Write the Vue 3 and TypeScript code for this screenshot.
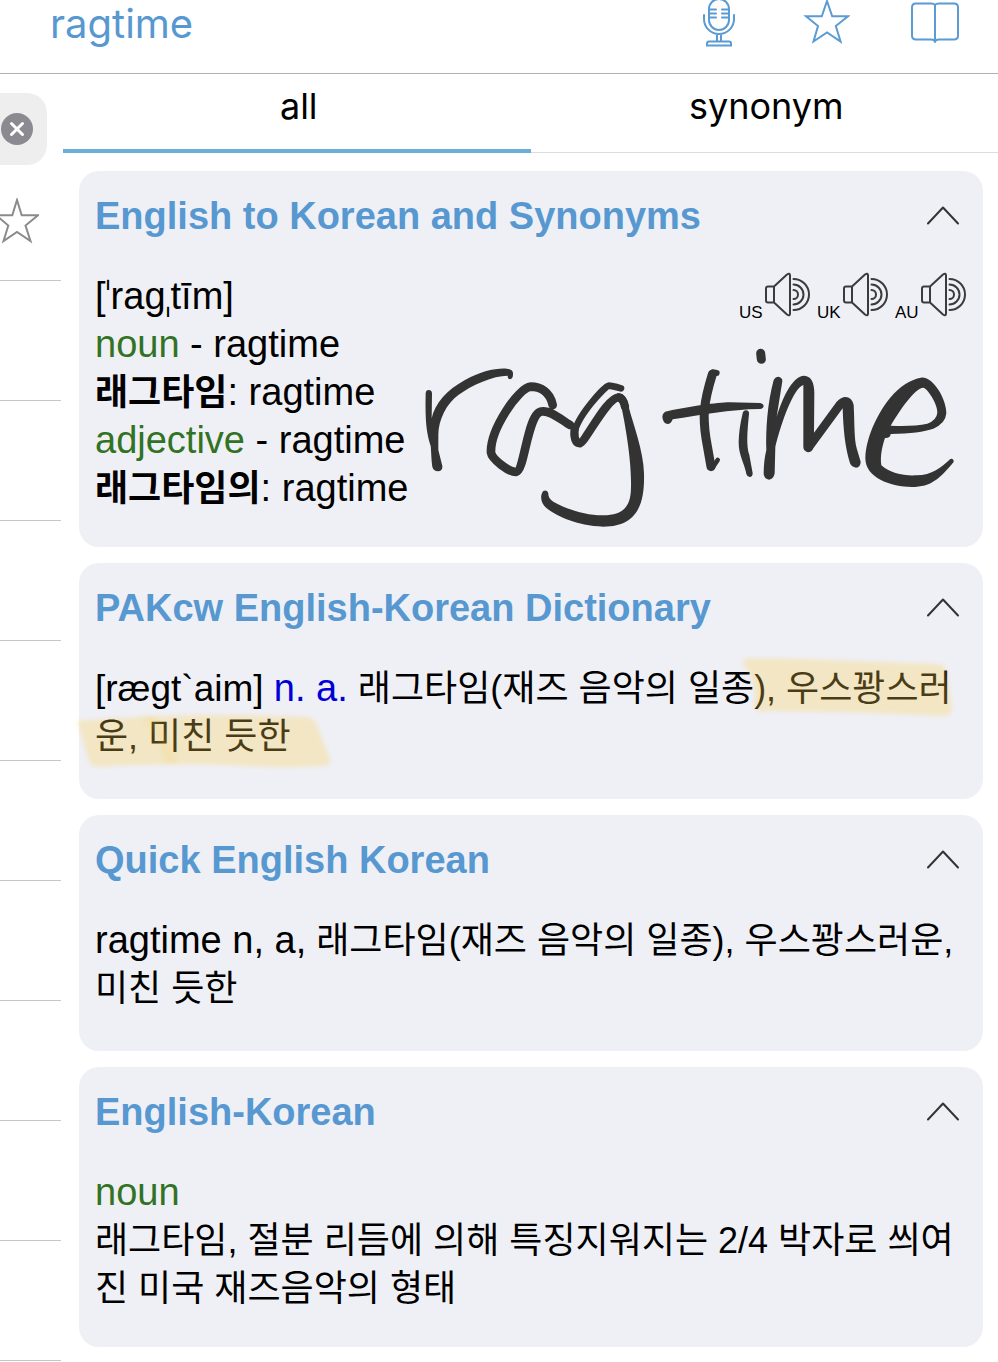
<script setup lang="ts">
import { ref } from 'vue'

type Tone = 'plain' | 'green' | 'blue' | 'strong' | 'phonetic' | 'stress' | 'gloss'
interface Part { text: string; tone?: Tone }
interface Entry {
  id: string
  title: string
  lines: Part[][]
  voices?: string[]
  sketch?: boolean
  marked?: boolean
  roomy?: boolean
}

const entries: Entry[] = [
  {
    id: 'synonyms',
    title: 'English to Korean and Synonyms',
    voices: ['US', 'UK', 'AU'],
    sketch: true,
    lines: [
      [
        { text: '[' },
        { text: 'ˈ', tone: 'stress' },
        { text: 'rag' },
        { text: 'ˌ', tone: 'stress' },
        { text: 'tīm]' },
      ],
      [{ text: 'noun', tone: 'green' }, { text: ' - ragtime' }],
      [{ text: '래그타임', tone: 'strong' }, { text: ': ragtime' }],
      [{ text: 'adjective', tone: 'green' }, { text: ' - ragtime' }],
      [{ text: '래그타임의', tone: 'strong' }, { text: ': ragtime' }],
    ],
  },
  {
    id: 'pakcw',
    title: 'PAKcw English-Korean Dictionary',
    marked: true,
    roomy: true,
    lines: [
      [
        { text: '[rægt`aim] ', tone: 'phonetic' },
        { text: 'n. a.', tone: 'blue' },
        { text: ' 래그타임(재즈 음악의 일종), 우스꽝스러운, 미친 듯한', tone: 'gloss' },
      ],
    ],
  },
  {
    id: 'quick',
    title: 'Quick English Korean',
    roomy: true,
    lines: [
      [
        { text: 'ragtime n, a,' },
        { text: ' 래그타임(재즈 음악의 일종), 우스꽝스러운, 미친 듯한', tone: 'gloss' },
      ],
    ],
  },
  {
    id: 'english-korean',
    title: 'English-Korean',
    lines: [
      [{ text: 'noun', tone: 'green' }],
      [{ text: '래그타임, 절분 리듬에 의해 특징지워지는 2/4 박자로 씌여진 미국 재즈음악의 형태', tone: 'gloss' }],
    ],
  },
]

const tabs = ['all', 'synonym']
const activeTab = ref('all')
const closed = ref<string[]>([])

function toggle(id: string) {
  closed.value = closed.value.includes(id)
    ? closed.value.filter((item) => item !== id)
    : [...closed.value, id]
}
</script>

<template>
  <div class="page">
    <header class="topbar">
      <h1 class="word">ragtime</h1>
      <div class="tools">
        <button type="button" class="tool" aria-label="Speak">
          <svg width="48" height="48" viewBox="0 0 48 48">
            <rect x="15" y="-1" width="20" height="31" rx="10" />
            <path d="M15 9.500h7M15 13.500h7M15 17.500h7M28 9.500h7M28 13.500h7M28 17.500h7M10 15v4a15 15 0 0 0 30 0v-4M23 34v7M27 34v7M13 45.500v-2q0-2 2-2h20q2 0 2 2v2z" />
          </svg>
        </button>
        <button type="button" class="tool" aria-label="Add to favourites">
          <svg width="48" height="48" viewBox="0 0 48 48">
            <path d="M25 1l5.200 15.200H46L33.800 26l4.800 15.500L25 32.500l-13.500 9L16 26 4 16.200h15.800z" />
          </svg>
        </button>
        <button type="button" class="tool" aria-label="Open dictionary">
          <svg width="50" height="48" viewBox="0 0 50 48">
            <path d="M25 5q-1-1.500-4-1.500H6Q2 3.500 2 7.500v28q0 4 4 4h15q4 0 4 3 0-3 4-3h15q4 0 4-4v-28q0-4-4-4H29q-3 0-4 1.500v37" />
          </svg>
        </button>
      </div>
    </header>

    <div class="columns">
      <aside class="side">
        <div class="search">
          <button type="button" class="clear" aria-label="Clear search">
            <svg width="32" height="32" viewBox="0 0 32 32">
              <circle cx="16" cy="16" r="16" />
              <path d="M10.500 10.500l11 11M21.500 10.500l-11 11" />
            </svg>
          </button>
        </div>
        <ul class="rows">
          <li v-for="n in 10" :key="n" class="row">
            <button v-if="n === 1" type="button" class="star" aria-label="Favourite">
              <svg width="44" height="46" viewBox="0 0 44 46">
                <path d="M22 2l4.700 15.200H43L30.500 27.500l5 15.500L22 34 8.500 43l4.800-15.500L1 17.200h16.300z" />
              </svg>
            </button>
          </li>
        </ul>
      </aside>

      <main class="main">
        <nav class="tabs" role="tablist">
          <button
            v-for="tab in tabs"
            :key="tab"
            type="button"
            role="tab"
            class="tab"
            :class="{ active: tab === activeTab }"
            :aria-selected="tab === activeTab"
            @click="activeTab = tab"
          >{{ tab }}</button>
        </nav>

        <div class="cards">
          <article v-for="entry in entries" :key="entry.id" class="card" :class="{ roomy: entry.roomy }">
            <div class="card-head">
              <h2 class="title">{{ entry.title }}</h2>
              <button
                type="button"
                class="fold"
                :aria-label="'Toggle ' + entry.title"
                :aria-expanded="!closed.includes(entry.id)"
                @click="toggle(entry.id)"
              >
                <svg width="32" height="20" viewBox="0 0 32 20"><path d="M1 17.500L16 1.500l15 16" /></svg>
              </button>
            </div>

            <div v-if="!closed.includes(entry.id)" class="body">
              <div v-for="(line, i) in entry.lines" :key="i" class="line">
                <p class="text"><span v-for="(part, j) in line" :key="j" :class="part.tone">{{ part.text }}</span></p>
                <div v-if="i === 0 && entry.voices" class="voices">
                  <button v-for="voice in entry.voices" :key="voice" type="button" class="voice">
                    <span>{{ voice }}</span>
                    <svg width="46" height="46" viewBox="0 0 46 46">
                      <path d="M1 16.500q0-2 2-2h6v16H3q-2 0-2-2zM9 14.500L22 2.500q3-2 3 1v38q0 3-3 1L9 30.500z" />
                      <path d="M28.500 7a15.500 15.500 0 0 1 0 31M28.500 12.500a10 10 0 0 1 0 20M28.500 18a4.500 4.500 0 0 1 0 9" />
                    </svg>
                  </button>
                </div>
              </div>
            </div>

            <svg v-if="entry.sketch" class="sketch" width="570" height="200" viewBox="0 0 1710 600" role="img" aria-label="Handwritten note">
              <g class="pen">
                <path class="ink" d="M47 160Q48 150 56 150Q65 150 66 160L65 235C75 190 110 150 165 120C210 95 255 84 290 86Q308 88 309 100Q310 116 300 118Q293 117 293 107C250 107 185 135 145 165C110 190 85 240 85 285L85 330L97 378Q98 393 84 394Q70 393 67 380C63 350 64 335 62 318C50 280 45 250 47 160Z" />
                <path stroke-width="26" d="M428 195C420 155 390 140 362 140C325 143 240 270 243 338C246 358 298 397 318 396C345 392 352 214 397 214C425 212 458 243 480 255" />
                <path stroke-width="20" d="M633 145Q605 137 596 137C585 139 498 230 492 285" />
                <path stroke-width="25" d="M494 265Q490 310 510 310C526 306 590 174 625 172Q640 175 645 200" />
                <path class="ink" d="M622 160C640 158 652 172 656 200C670 255 700 330 702 400C704 480 690 560 580 560C500 558 440 528 410 505C390 488 390 465 400 453Q412 448 415 460Q414 475 430 485C470 508 530 527 580 526C640 525 663 500 663 440C665 360 645 250 633 195Q629 182 622 184Z" />
              </g>
              <g class="pen" transform="translate(720 0)">
                <path stroke-width="18" d="M200 99L188 97" />
                <path stroke-width="27" d="M187 103C160 190 158 230 168 295L183 380" />
                <path stroke-width="14" d="M188 382L203 360" />
                <path class="ink" d="M37 230Q38 215 55 213C120 200 200 187 240 187L330 189Q341 191 341 199Q340 206 330 207C240 208 150 225 68 238Q64 252 52 252Q38 248 37 230Z" />
                <path class="ink" d="M278 220Q280 211 288 211Q298 212 297 222C291 280 289 320 298 345L308 400Q308 411 299 411Q291 410 289 402C284 370 265 345 266 305Q267 265 278 220Z" />
                <path stroke-width="27" d="M332 40L334 58" />
                <path class="ink" d="M371 120Q376 110 386 110Q398 113 397 124L380 230C400 165 430 108 462 107C485 108 493 130 493 160L492 278L560 185C580 162 606 168 611 195C614 250 612 295 620 325L632 365Q632 382 618 383Q605 381 600 370C585 320 580 270 578 205L490 325Q485 337 474 337Q460 333 460 320L460 135C430 145 395 245 376 320L374 400Q371 418 357 419Q343 417 341 402C341 375 344 350 349 330C347 270 352 190 371 120Z" />
                <path class="ink" d="M813 113C784 117 748 140 722 172C690 210 648 285 646 355C646 415 725 441 785 441C845 441 870 415 911 366Q911 354 901 357C875 382 845 406 800 406C760 408 720 400 694 376C690 350 696 320 705 294Q721 295 722 282Q810 280 850 266Q887 250 889 220C890 180 850 108 813 113ZM722 257C750 210 795 143 820 143C830 143 863 190 862 218Q860 240 832 251Q790 260 722 257Z" />
              </g>
            </svg>

            <svg v-if="entry.marked" class="marker" width="904" height="236" viewBox="0 0 904 236" aria-hidden="true">
              <path d="M663 101Q664 95 672 95Q760 97 856 101Q868 101 868 112L873 146Q873 154 862 153Q780 149 688 148Q678 151 675 144Q678 115 663 101Z" />
              <path d="M-2 158Q30 155 60 154Q150 150 226 154Q234 154 237 160L251 196Q253 203 242 203Q200 206 150 202Q80 200 20 204Q12 204 10 198Z" />
              <path class="faint" d="M62 154Q70 152 78 154Q88 176 99 201L86 201Q82 170 62 154Z" />
            </svg>
          </article>
        </div>
      </main>
    </div>
  </div>
</template>

<style>
body { background: #fff; overflow-x: hidden; }
</style>

<style scoped>
.page {
  font-family: "Liberation Sans", "Noto Sans CJK KR", sans-serif;
  color: #000;
  background: #fff;
}
button {
  display: block;
  padding: 0;
  border: 0;
  background: none;
  color: inherit;
  font: inherit;
  cursor: pointer;
}
h1, h2, p, ul { margin: 0; padding: 0; }
svg { display: block; fill: none; stroke-linecap: round; stroke-linejoin: round; }

.topbar {
  display: flex;
  justify-content: space-between;
  height: 73px;
  padding: 0 38px 0 50px;
  border-bottom: 1px solid #b0b0b3;
}
.word {
  font: 400 40px/48px Inter, sans-serif;
  color: #5798d1;
}
.tools { display: flex; align-items: flex-start; gap: 60px; }
.tool svg { stroke: #5b9bd3; stroke-width: 2; stroke-linejoin: miter; }

.columns { display: flex; align-items: flex-start; }
.side { flex: 0 0 61px; margin-right: 2px; }
.search {
  display: flex;
  align-items: center;
  width: 47px;
  height: 72px;
  margin-top: 19px;
  border-radius: 0 20px 20px 0;
  background: #eeeeef;
}
.clear { margin-left: 1px; }
.clear circle { fill: #8b8a90; }
.clear path { stroke: #fff; stroke-width: 3; }
.rows { list-style: none; }
.row { box-sizing: border-box; height: 120px; border-bottom: 1px solid #c6c6c8; }
.row:first-child { height: 116px; padding-top: 33px; }
.star { margin-left: -5px; }
.star svg { stroke: #8b8b8b; stroke-width: 2; stroke-linejoin: miter; }

.main { flex: 1; min-width: 0; }
.tabs { display: flex; }
.tab {
  flex: 1;
  box-sizing: border-box;
  height: 79px;
  padding: 0 0 15px 4px;
  border-bottom: 1px solid #dcdcde;
  font: 400 36px/48px Inter, sans-serif;
}
.tab.active { padding-bottom: 12px; border-bottom: 4px solid #6aafd6; }

.cards { display: flex; flex-direction: column; gap: 16px; padding: 18px 15px 15px 16px; }
.card {
  position: relative;
  padding: 21px 16px 35px;
  border-radius: 20px;
  background: #eff0f6;
}
.card.roomy { padding-bottom: 39px; }
.card-head { display: flex; align-items: center; justify-content: space-between; margin-bottom: 32px; }
.title { font-size: 38px; line-height: 48px; font-weight: 700; color: #5798d1; }
.fold { margin-right: 8px; }
.fold svg { stroke: #333; stroke-width: 2; }

.line { display: flex; justify-content: space-between; }
.text { font-size: 38px; line-height: 48px; }
.text span { line-height: 1; }
.gloss, .strong { font-size: 36px; }
.phonetic { font-size: 37px; }
.stress { font-family: Roboto, "Noto Sans", sans-serif; font-weight: 300; }
.green { color: #317322; }
.blue { color: #0000d6; }
.strong { font-weight: 700; }

.voices { display: flex; gap: 6px; height: 48px; }
.voice {
  display: flex;
  align-items: flex-end;
  justify-content: space-between;
  width: 72px;
  font-size: 17px;
  line-height: 14px;
}
.voice svg { margin-bottom: 2px; stroke: #3b3b3d; stroke-width: 2; }

.sketch { position: absolute; top: 169px; right: 3px; }
.pen { stroke: #333; }
.ink { fill: #333; stroke: none; }
.marker { position: absolute; top: 0; left: 0; overflow: visible; pointer-events: none; }
.marker path { fill: rgba(250, 208, 75, 0.29); filter: blur(2px); }
.marker .faint { fill: rgba(247, 200, 60, 0.12); }
</style>
